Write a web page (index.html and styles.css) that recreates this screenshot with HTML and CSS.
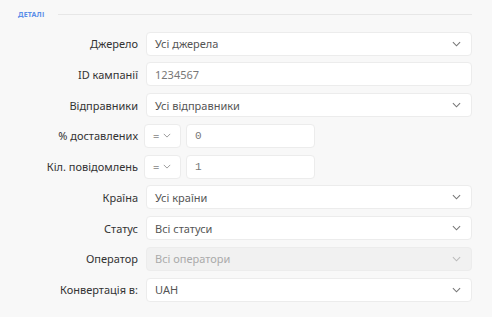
FILE: index.html
```html
<!DOCTYPE html>
<html lang="uk">
<head>
<meta charset="utf-8">
<link rel="stylesheet" href="styles.css">
</head>
<body>
<section class="details">
  <div class="section-head">
    <span class="section-title">ДЕТАЛІ</span>
    <span class="section-line"></span>
  </div>
  <div class="form">
    <label class="lbl">Джерело</label>
    <div class="field select"><span class="val">Усі джерела</span><svg class="chev" viewBox="0 0 10 6"><path d="M1 1l4 4 4-4"/></svg></div>

    <label class="lbl">ID кампанії</label>
    <div class="field"><span class="val muted">1234567</span></div>

    <label class="lbl">Відправники</label>
    <div class="field select"><span class="val">Усі відправники</span><svg class="chev" viewBox="0 0 10 6"><path d="M1 1l4 4 4-4"/></svg></div>

    <label class="lbl">% доставлених</label>
    <div class="pair">
      <div class="field op"><span class="eq">=</span><svg class="chev small" viewBox="0 0 10 6"><path d="M1 1l4 4 4-4"/></svg></div>
      <div class="field num"><span class="val muted mono">0</span></div>
    </div>

    <label class="lbl">Кіл. повідомлень</label>
    <div class="pair">
      <div class="field op"><span class="eq">=</span><svg class="chev small" viewBox="0 0 10 6"><path d="M1 1l4 4 4-4"/></svg></div>
      <div class="field num"><span class="val muted mono">1</span></div>
    </div>

    <label class="lbl">Країна</label>
    <div class="field select"><span class="val">Усі країни</span><svg class="chev" viewBox="0 0 10 6"><path d="M1 1l4 4 4-4"/></svg></div>

    <label class="lbl">Статус</label>
    <div class="field select"><span class="val">Всі статуси</span><svg class="chev" viewBox="0 0 10 6"><path d="M1 1l4 4 4-4"/></svg></div>

    <label class="lbl">Оператор</label>
    <div class="field select disabled"><span class="val">Всі оператори</span><svg class="chev" viewBox="0 0 10 6"><path d="M1 1l4 4 4-4"/></svg></div>

    <label class="lbl">Конвертація в:</label>
    <div class="field select"><span class="val">UAH</span><svg class="chev" viewBox="0 0 10 6"><path d="M1 1l4 4 4-4"/></svg></div>
  </div>
</section>
</body>
</html>
```

FILE: styles.css
```css
html, body {
  margin: 0;
  padding: 0;
  background: #f8f8f8;
  font-family: "Noto Sans", "Liberation Sans", sans-serif;
}
.details {
  padding: 8px 20px 0 0;
}
.section-head {
  display: flex;
  align-items: center;
  gap: 14px;
  padding-left: 18px;
  height: 12px;
}
.section-title {
  font-size: 7px;
  font-weight: 700;
  color: #5a8ee8;
  letter-spacing: 0.2px;
}
.section-line {
  flex: 1;
  height: 1px;
  background: #e7e7e7;
}
.form {
  margin-top: 11.5px;
  display: grid;
  grid-template-columns: 138px 1fr;
  column-gap: 8px;
  row-gap: 6.75px;
  align-items: center;
}
.lbl {
  text-align: right;
  font-size: 11px;
  color: #333;
}
.field {
  box-sizing: border-box;
  height: 24px;
  background: #fff;
  border: 1px solid #ececec;
  border-radius: 4px;
  display: flex;
  align-items: center;
  padding: 0 10px 0 8px;
  font-size: 11px;
}
.val {
  flex: 1;
  color: #555;
}
.val.muted {
  color: #777;
}
.mono {
  font-family: "Liberation Mono", monospace;
  font-size: 11px;
  color: #888;
}
.chev {
  width: 9px;
  height: 6px;
  fill: none;
  stroke: #777;
  stroke-width: 1.2;
}
.chev.small {
  width: 8px;
  height: 5px;
  stroke: #999;
}
.disabled {
  background: #f1f1f1;
}
.disabled .val {
  color: #aaa;
}
.disabled .chev {
  stroke: #bbb;
}
.pair {
  display: flex;
  gap: 5px;
  margin-left: -2px;
}
.op {
  width: 37px;
  padding: 0 6px 0 8px;
  gap: 4px;
}
.eq {
  color: #999;
  font-size: 11px;
}
.num {
  width: 129px;
}
```
